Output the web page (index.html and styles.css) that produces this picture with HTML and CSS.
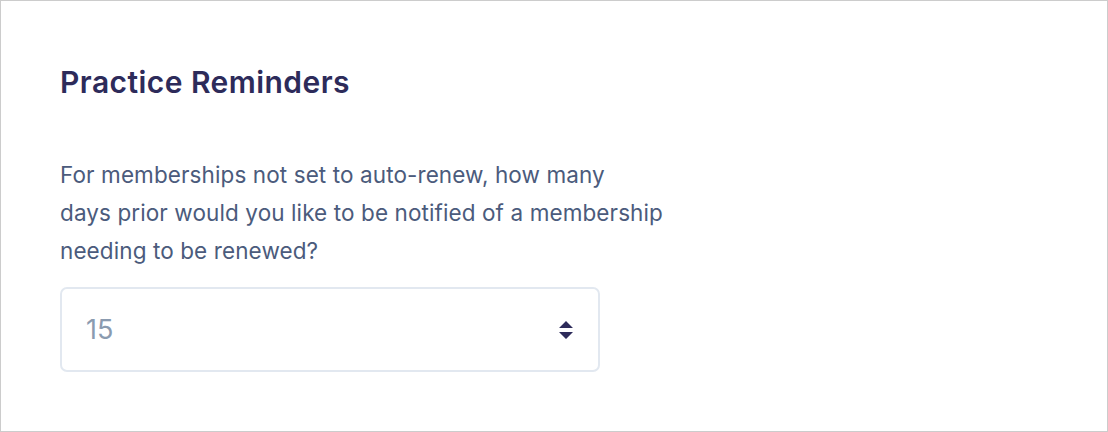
FILE: index.html
```html
<!DOCTYPE html>
<html>
<head>
<meta charset="utf-8">
<link rel="stylesheet" href="styles.css">
</head>
<body>
<div class="frame">
  <h2 class="title">Practice Reminders</h2>
  <p class="desc">For memberships not set to auto-renew, how many<br>days prior would you like to be notified of a membership<br>needing to be renewed?</p>
  <div class="select">
    <span class="value">15</span>
    <svg class="arrows" width="16" height="20" viewBox="0 0 16 20"><path d="M8 1 L15 8 H1 Z M1 12 H15 L8 19 Z" fill="#2d2b5a"/></svg>
  </div>
</div>
</body>
</html>
```
FILE: styles.css
```css
html, body { margin: 0; padding: 0; background: #fff; }
body { font-family: Inter, "Noto Sans", sans-serif; }
.frame {
  box-sizing: border-box;
  width: 1108px;
  height: 432px;
  border: 1px solid #cccccc;
  padding: 63px 59px 0;
  display: flex;
  flex-direction: column;
  align-items: flex-start;
}
.title {
  margin: 0;
  font-size: 30px;
  font-weight: 600;
  line-height: 36px;
  color: #2d2b5a;
  letter-spacing: 0.45px;
}
.desc {
  margin: 56px 0 0;
  width: 640px;
  font-size: 22.5px;
  line-height: 38px;
  color: #4b5b7c;
  letter-spacing: 0.1px;
}
.select {
  margin-top: 17px;
  box-sizing: border-box;
  width: 540px;
  height: 85px;
  border: 2px solid #e2e8f0;
  border-radius: 7px;
  display: flex;
  align-items: center;
  justify-content: space-between;
  padding: 0 24px;
}
.value { font-size: 27px; color: #8a9bb0; }
.arrows { display: block; }
```
